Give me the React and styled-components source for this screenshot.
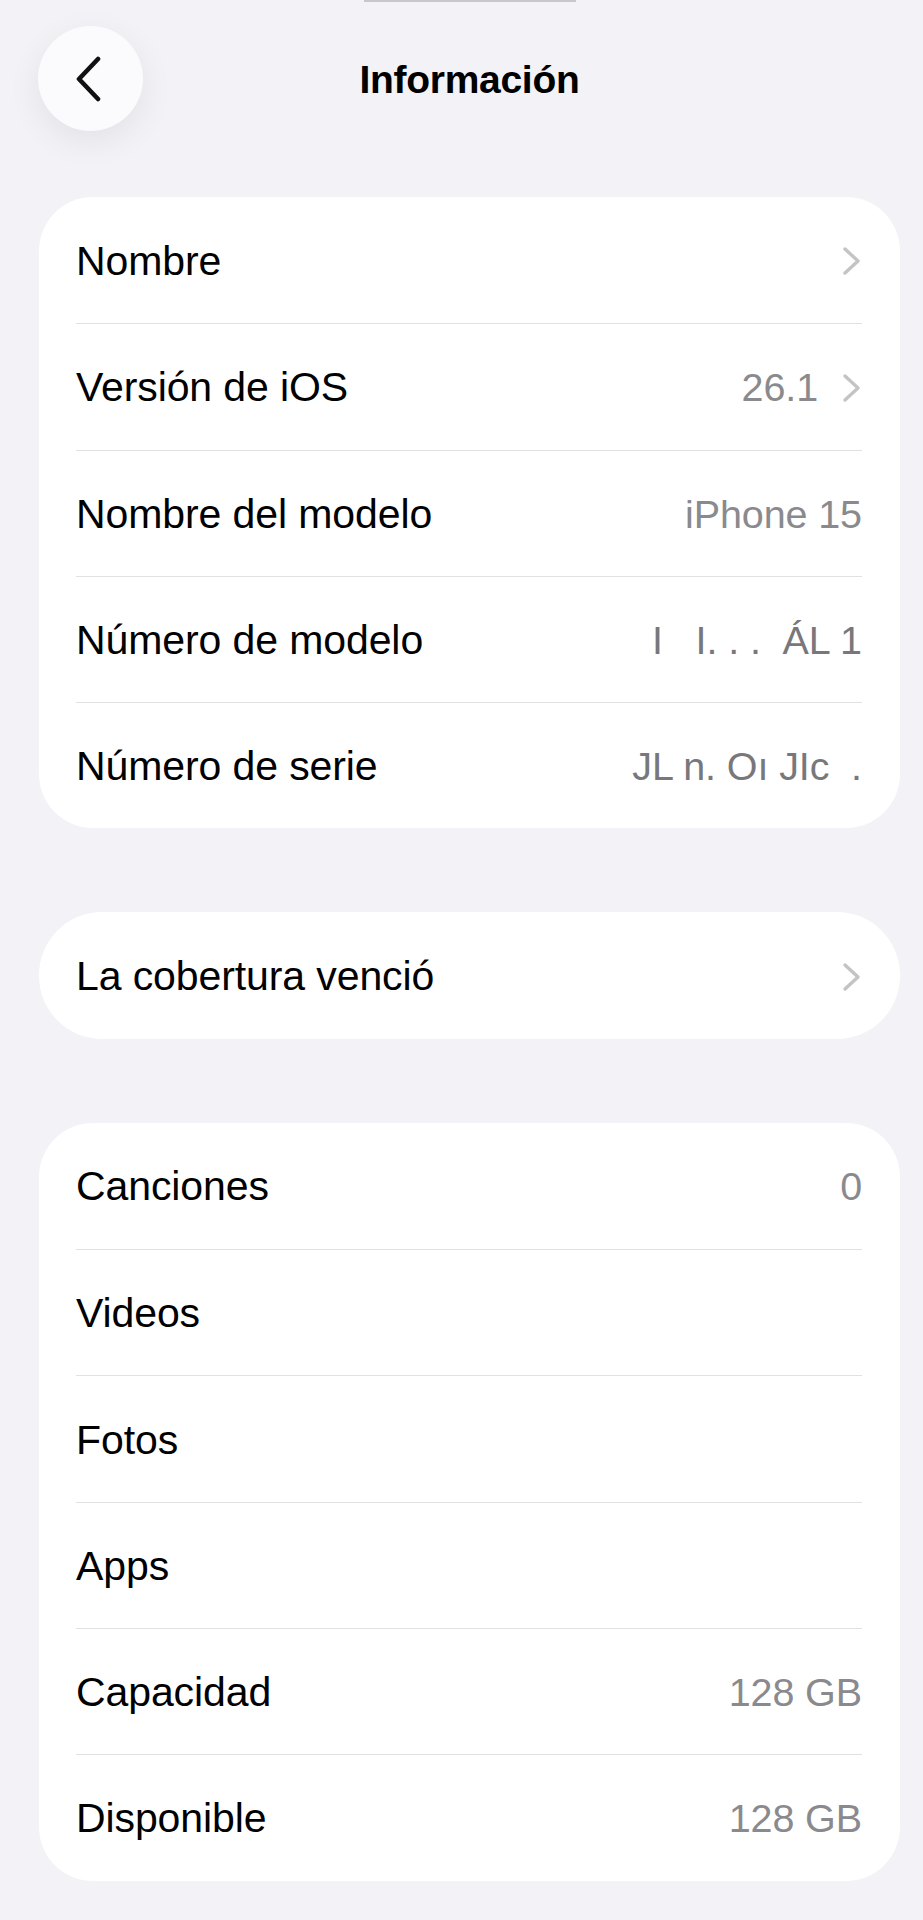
import React from 'react'
import styled, { createGlobalStyle } from 'styled-components';

const GlobalStyle = createGlobalStyle`
  html, body {
    margin: 0;
    padding: 0;
    background: #f2f2f7;
  }
  body {
    font-family: "Liberation Sans", Arial, sans-serif;
    -webkit-font-smoothing: antialiased;
  }
`

const Chevron = () => (
  <ChevronSvg width="19" height="30" viewBox="0 0 19 30">
    <polyline points="3,3 16,15 3,27" fill="none" stroke="#c4c4c7" strokeWidth="3.4" strokeLinecap="round" strokeLinejoin="round" />
  </ChevronSvg>
)

const BackIcon = () => (
  <svg width="28" height="46" viewBox="0 0 28 46">
    <polyline points="23,3 4,23 23,43" fill="none" stroke="#111" strokeWidth="4.6" strokeLinecap="round" strokeLinejoin="round" />
  </svg>
)

const deviceRows = [
  { label: 'Nombre', value: '', chevron: true },
  { label: 'Versión de iOS', value: '26.1', chevron: true },
  { label: 'Nombre del modelo', value: 'iPhone 15' },
  { label: 'Número de modelo', value: 'I\u00a0\u00a0 I. . .\u00a0 ÁL 1', blurred: true },
  { label: 'Número de serie', value: 'JL n. Oı JIc\u00a0 .', blurred: true },
]

const mediaRows = [
  { label: 'Canciones', value: '0' },
  { label: 'Videos', value: '' },
  { label: 'Fotos', value: '' },
  { label: 'Apps', value: '' },
  { label: 'Capacidad', value: '128 GB' },
  { label: 'Disponible', value: '128 GB' },
]

const InfoRow = ({ label, value, chevron, blurred }) => (
  <Row>
    <Label>{label}</Label>
    <Trail>
      {value && <Value blurred={blurred}>{value}</Value>}
      {chevron && <Chevron />}
    </Trail>
  </Row>
)

const App = () => (
  <Page>
    <GlobalStyle />
    <Grabber />
    <Header>
      <BackButton aria-label="Atrás">
        <BackIcon />
      </BackButton>
      <Title>Información</Title>
      <span />
    </Header>

    <Card>
      {deviceRows.map(row => <InfoRow key={row.label} {...row} />)}
    </Card>

    <Card pill>
      <InfoRow label="La cobertura venció" chevron />
    </Card>

    <Card>
      {mediaRows.map(row => <InfoRow key={row.label} {...row} />)}
    </Card>
  </Page>
)

const Page = styled.div`
  min-height: 1920px;
  box-sizing: border-box;
  padding: 0 23px 40px 39px;
  display: flex;
  flex-direction: column;
`

const Grabber = styled.div`
  align-self: center;
  width: 212px;
  height: 2px;
  background: #c7c7cc;
`

const Header = styled.div`
  display: grid;
  grid-template-columns: 1fr auto 1fr;
  align-items: center;
  margin-top: 24px;
  height: 105px;
`

const BackButton = styled.button`
  width: 105px;
  height: 105px;
  border-radius: 50%;
  border: none;
  margin-left: -1px;
  background: #fbfbfd;
  box-shadow: 0 10px 34px rgba(0, 0, 0, 0.07);
  display: flex;
  align-items: center;
  justify-content: center;
  padding: 0 4px 0 0;
  cursor: pointer;
`

const Title = styled.h1`
  margin: 0;
  font-size: 39px;
  font-weight: 700;
  color: #000;
  letter-spacing: -0.3px;
  padding-top: 3px;
`

const Card = styled.div`
  background: #fff;
  border-radius: ${props => props.pill ? '63px' : '54px'};
  margin-top: ${props => props.pill ? '84px' : '66px'};
  & + & {
    margin-top: 84px;
  }
`

const Row = styled.div`
  display: flex;
  align-items: center;
  justify-content: space-between;
  box-sizing: border-box;
  height: 126.3px;
  padding-top: 2px;
  margin: 0 38px 0 37px;
  & + & {
    border-top: 1.5px solid #e1e1e4;
  }
`

const Label = styled.span`
  font-size: 41px;
  color: #000;
  letter-spacing: -0.1px;
`

const Trail = styled.div`
  display: flex;
  align-items: center;
  gap: 24px;
`

const Value = styled.span`
  font-size: 39.5px;
  color: ${props => props.blurred ? '#77777c' : '#8a8a8e'};
  letter-spacing: -0.1px;
`

const ChevronSvg = styled.svg`
  display: block;
  margin-right: 1px;
`

export default App
